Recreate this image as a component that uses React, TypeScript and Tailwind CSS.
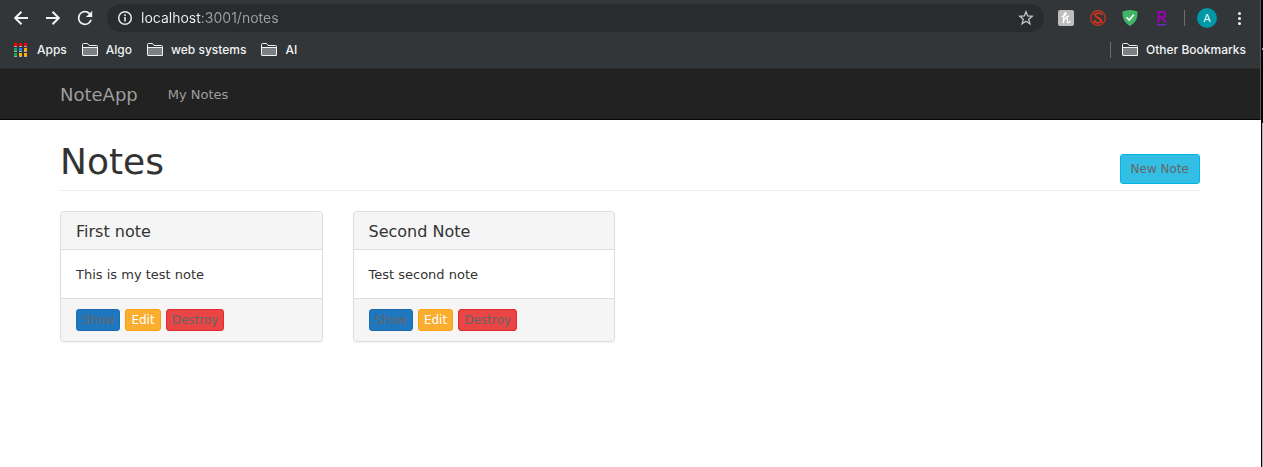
import type { ReactNode } from "react";

const notes = [
  { title: "First note", body: "This is my test note" },
  { title: "Second Note", body: "Test second note" },
];

function FolderIcon() {
  return (
    <svg width="16" height="14" viewBox="0 0 16 14" aria-hidden="true">
      <path d="M.5 12V1.5Q.5.5 1.5.5H5.500L7 2.500H14.500Q15.500 2.500 15.500 3.500V12.500H1Q.5 12.500.5 12Z" fill="#323639" stroke="#f1f3f4" />
      <path d="M1 5H15V12H1Z" fill="#7d8083" />
      <path d="M1 4.500H15" stroke="#f1f3f4" />
    </svg>
  );
}

function AppsIcon() {
  const rows = [
    ["#ff0000", "#ff0000", "#ff0000"],
    ["#0fa958", "#1a82ff", "#ffa800"],
    ["#0fa958", "#ffb000", "#ffb000"],
  ];
  return (
    <svg width="14" height="14" viewBox="0 0 14 14" aria-hidden="true">
      {rows.map((row, y) =>
        row.map((fill, x) => (
          <g key={`${x}-${y}`}>
            <rect x={x * 5} y={y * 5} width="3" height="3" fill={fill} />
            <rect x={x * 5} y={y * 5 + 3} width="3" height="1" fill="#a9a9a9" />
          </g>
        )),
      )}
    </svg>
  );
}

function IconButton({ label, children }: { label: string; children: ReactNode }) {
  return (
    <button type="button" aria-label={label} className="flex size-4 shrink-0 items-center justify-center">
      {children}
    </button>
  );
}

function Bookmark({ children }: { children: ReactNode }) {
  return (
    <a href="#" className="flex items-center gap-2">
      <FolderIcon />
      {children}
    </a>
  );
}

function Toolbar() {
  return (
    <div className="flex h-9 items-center pr-[19px] pl-[13px]">
      <div className="flex gap-4">
        <IconButton label="Back">
          <svg width="14" height="14" viewBox="0 0 14 14" fill="none" stroke="#f1f3f4" strokeWidth="2" className="shrink-0">
            <path d="M14 7H1.500M7.500 .7L1.200 7L7.500 13.300" />
          </svg>
        </IconButton>
        <IconButton label="Forward">
          <svg width="14" height="14" viewBox="0 0 14 14" fill="none" stroke="#f1f3f4" strokeWidth="2" className="shrink-0">
            <path d="M0 7H12.500M6.500 .7L12.800 7L6.500 13.300" />
          </svg>
        </IconButton>
        <IconButton label="Reload">
          <svg width="16" height="16" viewBox="4 4 16 16" fill="#f1f3f4" className="shrink-0">
            <path d="M17.650 6.350A7.958 7.958 0 0 0 12 4a8 8 0 1 0 7.730 10h-2.080A6 6 0 1 1 12 6c1.660 0 3.140.69 4.220 1.780L13 11h7V4z" transform="translate(12 12) scale(.9) translate(-12 -12)" />
          </svg>
        </IconButton>
      </div>
      <div className="ml-3.5 flex h-7 flex-1 items-center rounded-full bg-[#282c2f] px-2.5">
        <svg width="16" height="16" viewBox="0 0 16 16" fill="none" stroke="#e8eaed" className="shrink-0" aria-hidden="true">
          <circle cx="8" cy="8" r="6.300" strokeWidth="1.500" />
          <path d="M8 7V11.500M8 4.300V6" strokeWidth="1.600" />
        </svg>
        <input
          type="text"
          aria-label="Address"
          defaultValue="localhost:3001/notes"
          className="ml-2 min-w-0 flex-1 bg-linear-to-r from-[#f1f3f4] from-[60px] to-[#9aa0a6] to-[60px] bg-clip-text text-[14px] leading-5 text-transparent outline-none"
        />
        <IconButton label="Bookmark this page">
          <svg width="16" height="16" viewBox="0 0 16 16" fill="none" stroke="#c4c7ca" strokeWidth="1.300" className="shrink-0">
            <path d="M8 1.800L9.700 6L14.200 6.300L10.700 9.200L11.900 13.700L8 11.200L4.100 13.700L5.300 9.200L1.800 6.300L6.300 6Z" />
          </svg>
        </IconButton>
      </div>
      <div className="ml-3.5 flex items-center gap-4">
        <IconButton label="Honey">
          <svg width="16" height="16" viewBox="0 0 16 16" fill="none" className="shrink-0">
            <rect width="16" height="16" rx="2" fill="#bdbdbd" />
            <path d="M4 6.500C6 6 8 4.500 8 3.200C8 2 6.300 2.500 6 5L5.300 13C6 9.500 7.300 7.500 8.800 7.800C10.300 8 8.500 12.500 10 12.700Q11 12.800 12 11.500M8.500 6.700Q9.500 6.900 10.500 6" stroke="#fff" strokeWidth="1.300" strokeLinecap="round" />
          </svg>
        </IconButton>
        <IconButton label="Script blocker">
          <svg width="16" height="16" viewBox="0 0 16 16" fill="none" stroke="#d0341c" className="shrink-0">
            <circle cx="8" cy="8" r="7.300" strokeWidth="1.200" />
            <path d="M2.800 2.800L13.200 13.200M3 13L6 10" strokeWidth="1.200" />
            <path d="M11.800 5.200C11.500 2.500 5.500 2.300 5.300 5.300C5.200 8 11 7.500 11 10.500C11 13.700 5 13.500 4.500 10.500" strokeWidth="1.900" />
          </svg>
        </IconButton>
        <IconButton label="Ad blocker">
          <svg width="16" height="16" viewBox="0 0 16 16" className="shrink-0">
            <path d="M8 0C5.500.1 2.500.8.500 1.500C.3 7 1.500 12.500 8 16C14.500 12.500 15.700 7 15.500 1.500C13.500.8 10.500.1 8 0Z" fill="#40b568" />
            <path d="M4.500 7.300L7.200 10L11.800 4.800" fill="none" stroke="#fff" strokeWidth="1.600" />
          </svg>
        </IconButton>
        <IconButton label="Rakuten">
          <svg width="16" height="16" viewBox="0 0 16 16" fill="none" className="shrink-0">
            <path d="M4.500 12.500V2.100H8.200C12 2.100 12 7.600 8.200 7.600H4.500M8 7.600L11.700 12.500" stroke="#9b00b5" strokeWidth="2" />
            <path d="M2 14H13L11 15.500H4Z" fill="#6929c4" />
          </svg>
        </IconButton>
      </div>
      <div className="ml-3.5 h-4 w-px bg-[#6b6f72]" />
      <button type="button" aria-label="Profile" className="ml-3 flex size-5 items-center justify-center rounded-full bg-[#0097a7] text-[11px] text-white">
        A
      </button>
      <button type="button" aria-label="Menu" className="ml-5 flex w-1 flex-col items-center gap-0.5">
        <span className="size-[3px] rounded-full bg-[#f1f3f4]" />
        <span className="size-[3px] rounded-full bg-[#f1f3f4]" />
        <span className="size-[3px] rounded-full bg-[#f1f3f4]" />
      </button>
    </div>
  );
}

function BookmarkBar() {
  return (
    <nav aria-label="Bookmarks" className="flex h-[33px] items-center gap-[15px] border-b border-[#2b2b2b] px-3.5 pb-1 text-[12px] font-medium text-[#f1f3f4]">
      <a href="#" className="flex items-center gap-[9px]">
        <AppsIcon />
        Apps
      </a>
      <Bookmark>Algo</Bookmark>
      <Bookmark>web systems</Bookmark>
      <Bookmark>AI</Bookmark>
      <div className="ml-auto flex items-center gap-[11px]">
        <div className="h-4 w-px bg-[#6b6f72]" />
        <Bookmark>Other Bookmarks</Bookmark>
      </div>
    </nav>
  );
}

function NoteCard({ title, body }: { title: string; body: string }) {
  return (
    <article className="rounded border border-[#dddddd] bg-white shadow-[0_1px_1px_rgba(0,0,0,0.05)]">
      <h2 className="rounded-t border-b border-[#dddddd] bg-[#f5f5f5] px-[15px] pt-2.5 pb-[7px] text-[16px] leading-5">{title}</h2>
      <p className="px-[15px] pt-4 pb-3.5 text-[13px] leading-[18px]">{body}</p>
      <div className="flex gap-[5px] rounded-b border-t border-[#dddddd] bg-[#f5f5f5] px-[15px] py-2.5 text-[12px] leading-5">
        <button type="button" className="rounded-[3px] border border-[#1b6db0] bg-[#1f77bf] px-[5px] text-[#666666]">Show</button>
        <button type="button" className="rounded-[3px] border border-[#f9a00f] bg-[#fbad2f] px-[5px] text-white">Edit</button>
        <button type="button" className="rounded-[3px] border border-[#e12b31] bg-[#ea4444] px-[5px] text-[#666666]">Destroy</button>
      </div>
    </article>
  );
}

export default function App() {
  return (
    <div className="flex min-h-screen bg-white">
      <div className="min-w-0 flex-1">
        <header className="border-r border-[#55585a] bg-[#323639] font-['Inter',sans-serif]">
          <Toolbar />
          <BookmarkBar />
        </header>
        <div className="font-['DejaVu_Sans',sans-serif] text-[#333333]">
          <nav aria-label="Main" className="border-r border-r-[#55585a] bg-[#222222]">
            <div className="border-b border-[#080808]">
              <div className="mx-auto flex h-[50px] max-w-[1170px] items-center gap-[30px] px-[15px] pt-px text-[#9d9d9d]">
                <a href="#" className="text-[18px]">NoteApp</a>
                <a href="#" className="text-[13px]">My Notes</a>
              </div>
            </div>
          </nav>
          <div className="pr-px">
            <main className="mx-auto max-w-[1170px] px-[15px] pt-5">
              <div className="flex items-end justify-between border-b border-[#eeeeee] pb-1.5">
                <h1 className="text-[36px] leading-[44px]">Notes</h1>
                <button type="button" className="rounded-[3px] border border-[#00b5e2] bg-[#33bfe3] px-2.5 py-[5px] text-[12px] leading-[18px] text-[#666666]">New Note</button>
              </div>
              <div className="grid grid-cols-4 gap-[30px] pt-5">
                {notes.map((note) => (
                  <NoteCard key={note.title} {...note} />
                ))}
              </div>
            </main>
          </div>
        </div>
      </div>
      <div className="flex w-0.5 flex-col bg-black">
        <div className="mt-12 ml-auto h-0.5 w-px bg-[#aaaaaa]" />
        <div className="mt-[73px] ml-auto w-px flex-1 bg-[#b8b8b8]" />
      </div>
    </div>
  );
}
